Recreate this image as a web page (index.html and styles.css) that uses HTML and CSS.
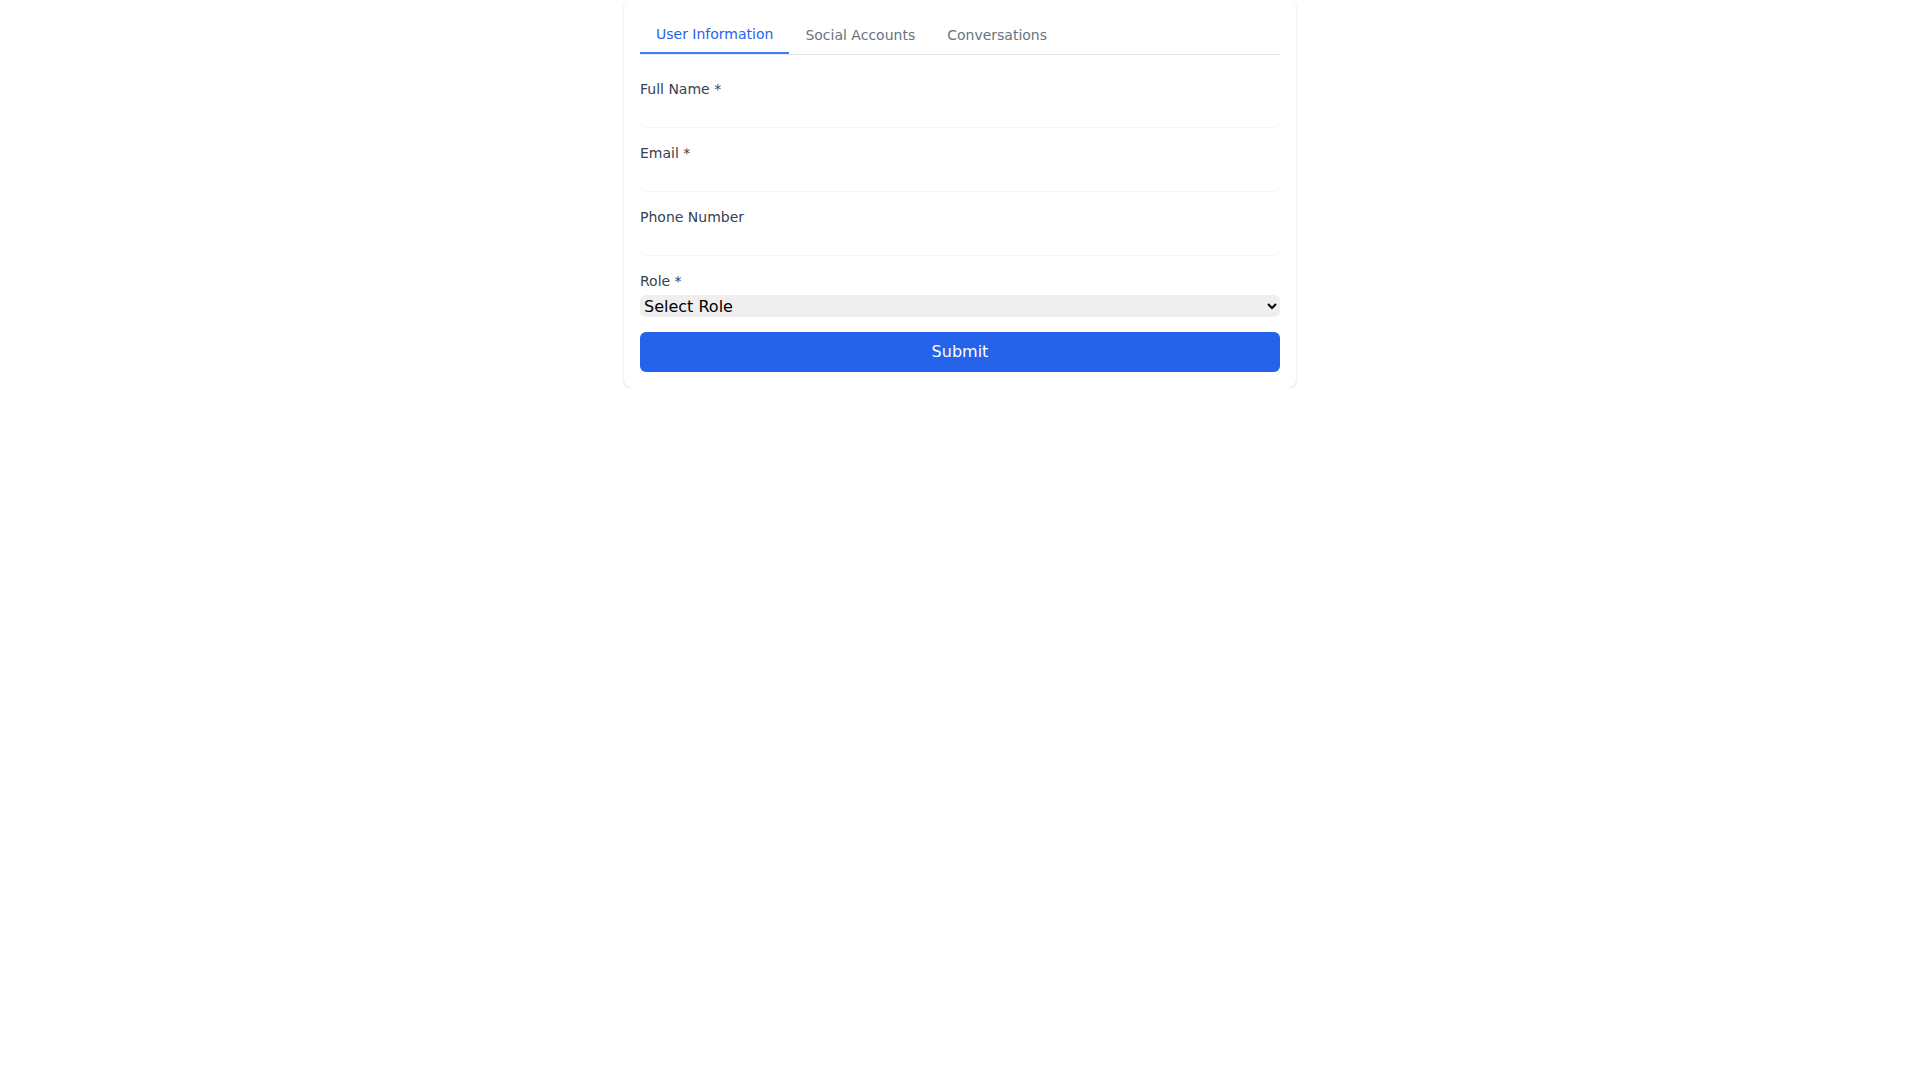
FILE: index.html
```html
<!DOCTYPE html>
<html lang="en">
<head>
<meta charset="utf-8">
<title>User Form</title>
<link rel="stylesheet" href="styles.css">
</head>
<body>
<div class="card">
  <div class="tabs">
    <button class="tab active">User Information</button>
    <button class="tab">Social Accounts</button>
    <button class="tab">Conversations</button>
  </div>
  <form class="form">
    <div class="field">
      <label class="label">Full Name *</label>
      <input class="input" type="text">
    </div>
    <div class="field">
      <label class="label">Email *</label>
      <input class="input" type="email">
    </div>
    <div class="field">
      <label class="label">Phone Number</label>
      <input class="input" type="tel">
    </div>
    <div class="field field-last">
      <label class="label">Role *</label>
      <select class="select">
        <option>Select Role</option>
      </select>
    </div>
    <button type="button" class="submit">Submit</button>
  </form>
</div>
</body>
</html>
```

FILE: styles.css
```css
* {
  box-sizing: border-box;
}

html, body {
  margin: 0;
  padding: 0;
  background: #ffffff;
  font-family: "DejaVu Sans", sans-serif;
  font-size: 16px;
  line-height: 1.5;
}

.card {
  width: 672px;
  margin: 0 auto;
  padding: 16px;
  background: #ffffff;
  border-radius: 8px;
  box-shadow: 0 1px 3px rgba(0, 0, 0, 0.1), 0 1px 2px rgba(0, 0, 0, 0.06);
}

.tabs {
  display: flex;
  border-bottom: 1px solid #e5e7eb;
  margin-bottom: 24px;
}

.tab {
  font-family: inherit;
  font-size: 14px;
  line-height: 20px;
  padding: 8px 16px;
  margin: 0;
  border: 0;
  background: transparent;
  color: #6b7280;
  cursor: pointer;
}

.tab.active {
  color: #2563eb;
  border-bottom: 2px solid #3b82f6;
}

.form {
  display: flex;
  flex-direction: column;
}

.field {
  display: flex;
  flex-direction: column;
  margin-bottom: 16px;
}

.field-last {
  margin-bottom: 15px;
}

.label {
  font-size: 14px;
  line-height: 20px;
  color: #374151;
}

.input {
  display: block;
  width: 100%;
  margin-top: 4px;
  height: 24px;
  padding: 0;
  border: 0;
  border-radius: 6px;
  font-family: inherit;
  font-size: 16px;
  line-height: 24px;
  background: #ffffff;
  box-shadow: 0 1px 2px rgba(0, 0, 0, 0.05);
  outline: none;
}

.select {
  display: block;
  width: 100%;
  margin-top: 4px;
  height: 22px;
  padding: 0;
  border: 0;
  border-radius: 6px;
  font-family: inherit;
  font-size: 16px;
  color: #000000;
  background-color: #efefef;
}

.submit {
  display: block;
  width: 100%;
  height: 40px;
  padding: 8px 16px;
  margin: 0;
  border: 0;
  border-radius: 6px;
  background: #2563eb;
  color: #ffffff;
  font-family: inherit;
  font-size: 16px;
  line-height: 24px;
  cursor: pointer;
}
```
